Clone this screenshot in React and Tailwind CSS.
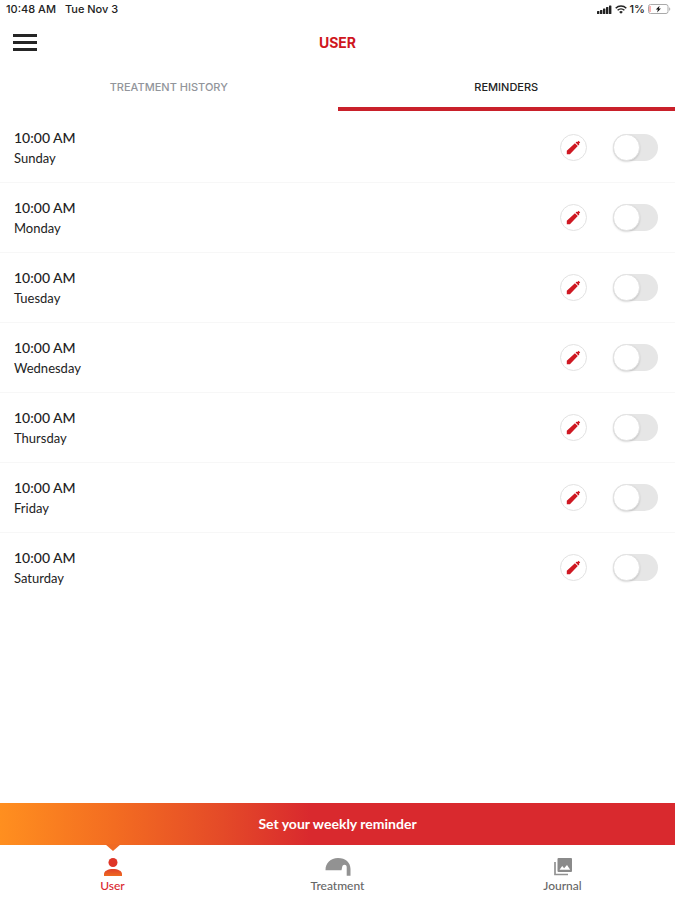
import { useState } from "react";

const DAYS = ["Sunday", "Monday", "Tuesday", "Wednesday", "Thursday", "Friday", "Saturday"];

function StatusBar() {
  return (
    <div className="flex h-[18px] items-center justify-between pl-[6px] pr-[4px] font-['Inter','Liberation_Sans',sans-serif] text-[11px] font-medium leading-[18px] text-[#222]">
      <div className="flex gap-[9px]">
        <span>10:48 AM</span>
        <span>Tue Nov 3</span>
      </div>
      <div className="flex items-center gap-[3px]">
        <svg className="h-[9px] w-[15px]" viewBox="0 0 15 9" fill="#222" aria-hidden="true">
          <rect x="0" y="6" width="2.4" height="3" rx=".5" />
          <rect x="3" y="5" width="2.4" height="4" rx=".5" />
          <rect x="6" y="3.5" width="2.4" height="5.5" rx=".5" />
          <rect x="9" y="2" width="2.4" height="7" rx=".5" />
          <rect x="12" y="0.5" width="2.4" height="8.5" rx=".5" />
        </svg>
        <svg className="h-[9px] w-[12px]" viewBox="0 0 12 9" fill="none" stroke="#222" strokeWidth="1.5" aria-hidden="true">
          <path d="M.7 3.2a7.6 7.6 0 0 1 10.6 0M2.6 5.3a4.9 4.9 0 0 1 6.8 0" />
          <path d="M4.2 6.9a2.6 2.6 0 0 1 3.6 0L6 8.7z" fill="#222" stroke="none" />
        </svg>
        <span>1%</span>
        <svg className="h-[10px] w-[23px]" viewBox="0 0 23 10" aria-hidden="true">
          <rect x=".5" y=".5" width="19.5" height="9" rx="2" fill="none" stroke="#aaa" />
          <rect x="1.5" y="2" width="1" height="6" fill="#ef6a6a" />
          <path d="M21.2 3.2c1.4.4 1.4 3.2 0 3.6z" fill="#aaa" />
          <path d="M11.6 1.8 7.8 5.5h2.1l-.8 2.9 3.8-3.8h-2.1z" fill="#111" />
        </svg>
      </div>
    </div>
  );
}

function ReminderRow({ day }) {
  const [on, setOn] = useState(false);
  return (
    <li className="flex h-[70px] items-center border-b border-[#f7f7f7] pl-[14px] pr-[17px] last:border-transparent">
      <div className="flex-1">
        <p className="text-[14px] font-medium leading-[20px] text-[#222]">10:00 AM</p>
        <p className="text-[13px] leading-[20px] text-[#222]">{day}</p>
      </div>
      <button
        type="button"
        aria-label={`Edit ${day} reminder`}
        className="mr-[26px] flex h-[27px] w-[27px] items-center justify-center rounded-full border border-[#e2e2e2] bg-white"
      >
        <svg className="h-[15px] w-[15px]" viewBox="0 0 15 15" fill="#cf1822" aria-hidden="true">
          <path d="M.8 14.2V10.8L8.9 3.2l2.9 2.9-7.9 8.1zM9.6 2.6l.8-.8 1 .2L12.5.8l1.700 1.600-1.200 1.200.3.900-.9.900z" />
        </svg>
      </button>
      <input
        type="checkbox"
        role="switch"
        aria-label={`${day} reminder`}
        checked={on}
        onChange={() => setOn(!on)}
        className="flex h-[27px] w-[45px] cursor-pointer appearance-none rounded-full bg-[#e6e6e6] before:h-[27px] before:w-[27px] before:rounded-full before:border before:border-[#e2e2e2] before:bg-white before:shadow-[0_1px_2px_rgba(0,0,0,0.15)] before:content-[''] checked:justify-end checked:bg-[#d9262e]"
      />
    </li>
  );
}

function NavItem({ label, active, children }) {
  return (
    <a
      href={`#${label.toLowerCase()}`}
      aria-current={active ? "page" : undefined}
      className={`relative flex flex-1 flex-col items-center pt-[12px] text-[12px] font-medium leading-[18px] ${
        active ? "text-[#d9262e]" : "text-[#666]"
      }`}
    >
      {active && (
        <svg className="absolute -top-px h-[7px] w-[16px]" viewBox="0 0 16 7" fill="#f06a22" aria-hidden="true">
          <path d="M0 0h16L8 7z" />
        </svg>
      )}
      {children}
      <span>{label}</span>
    </a>
  );
}

export default function App() {
  return (
    <div className="flex min-h-screen flex-col bg-white font-['Lato','Liberation_Sans',sans-serif]">
      <StatusBar />
      <header className="grid h-[49px] grid-cols-[1fr_auto_1fr] items-center px-[13px]">
        <button type="button" aria-label="Menu" className="flex w-[24px] flex-col gap-[4px]">
          <span className="h-[3px] w-full bg-[#252525]" />
          <span className="h-[3px] w-full bg-[#252525]" />
          <span className="h-[3px] w-full bg-[#252525]" />
        </button>
        <h1 className="font-['Inter','Liberation_Sans',sans-serif] text-[14px] font-bold leading-[20px] text-[#cf1620]">USER</h1>
      </header>
      <div
        role="tablist"
        className="grid h-[44px] grid-cols-2 font-['Inter','Liberation_Sans',sans-serif] text-[11px] font-medium leading-[16px]"
      >
        <button type="button" role="tab" aria-selected="false" className="border-b-4 border-transparent text-[#92959b]">
          TREATMENT HISTORY
        </button>
        <button type="button" role="tab" aria-selected="true" className="border-b-4 border-[#c9202a] text-[#222]">
          REMINDERS
        </button>
      </div>
      <ul className="flex-1 pt-[2px]">
        {DAYS.map((day) => (
          <ReminderRow key={day} day={day} />
        ))}
      </ul>
      <button
        type="button"
        className="h-[42px] w-full bg-[linear-gradient(90deg,#ff8f1f_0%,#f36c21_17%,#e44a28_33%,#d9292e_46%,#d9292e_100%)] pb-[2px] text-[14px] font-bold text-white"
      >
        Set your weekly reminder
      </button>
      <nav className="flex h-[55px]">
        <NavItem label="User" active>
          <svg className="h-[20px] w-[20px]" viewBox="0 0 20 20" aria-hidden="true">
            <defs>
              <linearGradient id="person" x1="0" y1="0" x2="0" y2="1">
                <stop offset="0" stopColor="#e0402a" />
                <stop offset="1" stopColor="#ee6a20" />
              </linearGradient>
            </defs>
            <circle cx="10" cy="5.5" r="4.5" fill="#df3527" />
            <path d="M1 19v-2c0-3 4-5 9-5s9 2 9 5v2z" fill="url(#person)" />
          </svg>
        </NavItem>
        <NavItem label="Treatment">
          <svg className="h-[20px] w-[28px]" viewBox="0 0 28 20" fill="#929292" aria-hidden="true">
            <path d="M1.500 13.200C1.500 6 6.500 1 14 1s12.500 4.500 12.500 11v6.800h-3.800V10c0-3-4.200-3-4.500 0l-.7 3.200H2.500z" />
          </svg>
        </NavItem>
        <NavItem label="Journal">
          <svg className="h-[20px] w-[20px]" viewBox="0 0 20 20" aria-hidden="true">
            <path d="M2 5v12.500h13" fill="none" stroke="#929292" strokeWidth="1.7" />
            <rect x="4.5" y="1" width="14.5" height="14" rx="1" fill="#8a8a8a" />
            <path d="M6.500 12.700 9.200 9l1.900 2.300L14 8l3.200 4.700z" fill="#fff" />
          </svg>
        </NavItem>
      </nav>
    </div>
  );
}
